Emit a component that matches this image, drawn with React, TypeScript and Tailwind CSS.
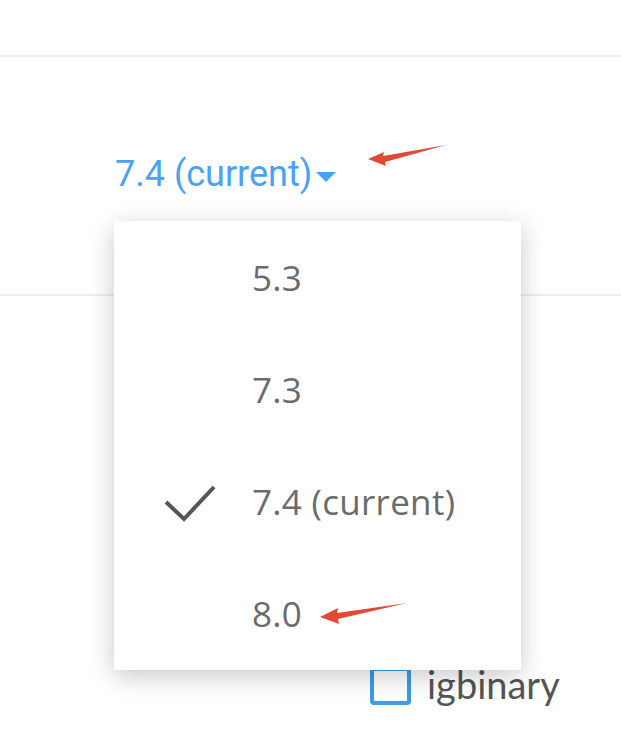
import React from "react";

const items = ["5.3", "7.3", "7.4 (current)", "8.0"];

export default function App() {
  return (
    <div className="relative w-[621px] h-[741px] overflow-hidden bg-white">
      <div className="h-[57px] border-b-2 border-[#eeeeee]" />
      <div className="h-[239px] border-b-2 border-[#eeeeee] pl-[115px] pt-[97px]">
        <div
          className="flex items-center text-[36px] leading-[40px] text-[#4aa3f0]"
          style={{ fontFamily: "Roboto, 'Liberation Sans', sans-serif" }}
        >
          <span>7.4 (current)</span>
          <svg width="20" height="10" viewBox="0 0 20 10" className="ml-[4px] mt-[6px]">
            <path d="M0 0 L20 0 L10 10 Z" fill="#4aa3f0" />
          </svg>
        </div>
      </div>
      <div className="flex items-center pl-[370px] pt-[371px]">
        <div className="w-[41px] h-[38px] rounded-[4px] border-[4px] border-[#3d9be9]" />
        <span
          className="ml-[16px] -mt-[4px] text-[38px] leading-[40px] text-[#555555]"
          style={{ fontFamily: "Lato, 'Open Sans', sans-serif" }}
        >
          igbinary
        </span>
      </div>

      <div className="absolute left-[114px] top-[221px] w-[407px] h-[449px] bg-white pt-[1px] shadow-[0_6px_24px_rgba(0,0,0,0.22)]">
        {items.map((it) => (
          <div key={it} className="relative flex h-[112px] items-center pl-[138px]">
            {it === "7.4 (current)" && (
              <svg width="54" height="40" viewBox="0 0 54 40" className="absolute left-[49px] top-[37px]">
                <path d="M3 19 L21 36 L51 4" fill="none" stroke="#555555" strokeWidth="4" />
              </svg>
            )}
            <span
              className="text-[35px] tracking-[0.3px] leading-[40px] text-[#6b6b6b]"
              style={{ fontFamily: "'Open Sans', sans-serif" }}
            >
              {it}
            </span>
          </div>
        ))}
      </div>

      <svg className="absolute left-0 top-0" width="621" height="741" viewBox="0 0 621 741">
        <path d="M446 145 L383 156 L384 152 L368 159 L386 166 L385 162 Z" fill="#e04a35" />
        <path d="M407 603 L337 613 L338 608 L320 617 L339 624 L338 619 Z" fill="#e04a35" />
      </svg>
    </div>
  );
}
